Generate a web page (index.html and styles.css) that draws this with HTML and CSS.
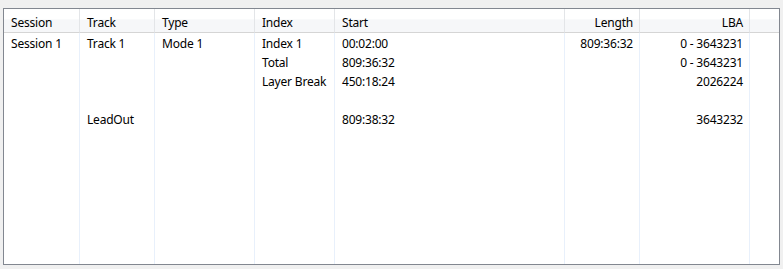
FILE: index.html
```html
<!DOCTYPE html>
<html lang="en">
<head>
    <meta charset="UTF-8">
    <title>Disc Layout</title>
    <link rel="stylesheet" href="styles.css">
</head>
<body>

<div class="list-view">
    <!-- Header row -->
    <div class="head">Session</div>
    <div class="head">Track</div>
    <div class="head">Type</div>
    <div class="head">Index</div>
    <div class="head">Start</div>
    <div class="head right">Length</div>
    <div class="head right">LBA</div>
    <div class="head filler"></div>

    <!-- Track 1 -->
    <div class="cell">Session 1</div>
    <div class="cell">Track 1</div>
    <div class="cell">Mode 1</div>
    <div class="cell">Index 1</div>
    <div class="cell">00:02:00</div>
    <div class="cell right">809:36:32</div>
    <div class="cell right">0 - 3643231</div>
    <div class="cell filler"></div>

    <div class="cell"></div>
    <div class="cell"></div>
    <div class="cell"></div>
    <div class="cell">Total</div>
    <div class="cell">809:36:32</div>
    <div class="cell right"></div>
    <div class="cell right">0 - 3643231</div>
    <div class="cell filler"></div>

    <div class="cell"></div>
    <div class="cell"></div>
    <div class="cell"></div>
    <div class="cell">Layer Break</div>
    <div class="cell">450:18:24</div>
    <div class="cell right"></div>
    <div class="cell right">2026224</div>
    <div class="cell filler"></div>

    <div class="cell"></div>
    <div class="cell"></div>
    <div class="cell"></div>
    <div class="cell"></div>
    <div class="cell"></div>
    <div class="cell"></div>
    <div class="cell"></div>
    <div class="cell filler"></div>

    <!-- Lead-out -->
    <div class="cell"></div>
    <div class="cell">LeadOut</div>
    <div class="cell"></div>
    <div class="cell"></div>
    <div class="cell">809:38:32</div>
    <div class="cell right"></div>
    <div class="cell right">3643232</div>
    <div class="cell filler"></div>

    <!-- Empty space below the rows -->
    <div class="cell"></div>
    <div class="cell"></div>
    <div class="cell"></div>
    <div class="cell"></div>
    <div class="cell"></div>
    <div class="cell"></div>
    <div class="cell"></div>
    <div class="cell filler"></div>
</div>

</body>
</html>
```

FILE: styles.css
```css
body {
    margin: 0;
    padding: 8px 4px 5px 3px;
    background-color: #f0f0f0;
    font-family: 'Noto Sans', 'Open Sans', sans-serif;
    font-size: 12px;
    letter-spacing: -0.2px;
    color: #000;
}

.list-view {
    display: grid;
    grid-template-columns: 76px 75px 100px 80px 230px 75px 110px 29px;
    grid-template-rows: 24px repeat(5, 19px) 1fr;
    width: 775px;
    height: 255px;
    background-color: #fff;
    border: 1px solid #828790;
}

/* Column headers */
.head {
    display: flex;
    align-items: center;
    padding: 3px 6px 0 7px;
    background: linear-gradient(#ffffff 0%, #ffffff 45%, #f6f7f9 46%, #f6f7f9 100%);
    border-right: 1px solid #e3e5e8;
    border-bottom: 1px solid #d5d5d5;
    white-space: nowrap;
}

.head.right {
    justify-content: flex-end;
}

/* Body cells */
.cell {
    display: flex;
    align-items: center;
    padding: 2px 6px 0 7px;
    border-right: 1px solid #e8f0fb;
    white-space: nowrap;
}

.cell.right {
    justify-content: flex-end;
}

.filler {
    border-right: none;
}
```
